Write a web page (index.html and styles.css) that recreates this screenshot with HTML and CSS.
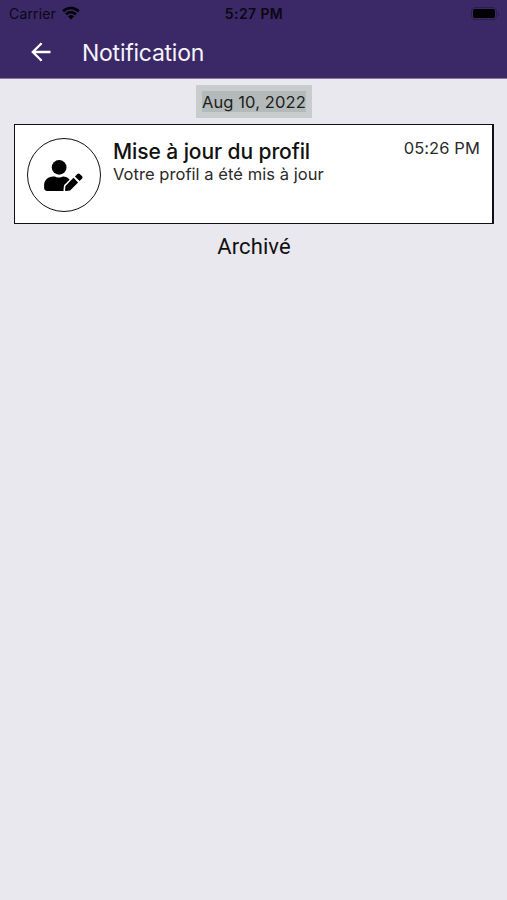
FILE: index.html
```
<!DOCTYPE html>
<html lang="fr">
<head>
  <meta charset="UTF-8">
  <meta name="viewport" content="width=device-width, initial-scale=1.0">
  <title>Notification</title>
  <link rel="stylesheet" href="styles.css">
</head>
<body>
  <header class="header">
    <div class="status-bar">
      <div class="carrier">
        <span>Carrier</span>
        <svg class="wifi" viewBox="0 0 18 14" width="18" height="14">
          <path d="M1.2 5.200a11.200 11.200 0 0 1 15.600 0M4 8.300a7.200 7.200 0 0 1 10 0" fill="none" stroke="#000" stroke-width="2.6"/>
          <path d="M9 13.500l-3-3.100a4.300 4.300 0 0 1 6 0z"/>
        </svg>
      </div>
      <div class="clock">5:27 PM</div>
      <div class="battery"><span class="battery-level"></span></div>
    </div>
    <div class="nav-bar">
      <svg class="back" viewBox="0 0 20 20" width="20" height="20">
        <path d="M19.500 10H2M10.600 1.200L1.800 10l8.800 8.800" fill="none" stroke="#fff" stroke-width="2.3"/>
      </svg>
      <h1>Notification</h1>
    </div>
  </header>
  <main class="content">
    <div class="date"><span>Aug 10, 2022</span></div>
    <div class="card">
      <div class="avatar">
        <svg viewBox="0 0 640 512" width="39" height="31">
          <circle cx="248" cy="122" r="122"/>
          <path d="M313.600 274h-5c-22.200 10.200-38.900 16-64.900 16s-42.600-5.800-64.900-16h-28C60.200 274 0 338 0 412V464c0 26.500 21.500 48 48 48h274.900c-2.400-6.800-3.400-14-2.600-21.300l6.800-60.900 1.200-11.100 7.900-7.900 84-84C395 292 353 274 313.600 274z"/>
          <path d="M353 428l-8 66c-1.100 10.200 7.500 18.800 17.600 17.600l66-8L561 371l-76-76zM627 268.900L589 231c-12-12-27-12-39 0l-41 41 76 76 42-41.700c10-10 10-27 0-37.400z"/>
        </svg>
      </div>
      <div class="message">
        <h2>Mise à jour du profil</h2>
        <p>Votre profil a été mis à jour</p>
      </div>
      <div class="time">05:26 PM</div>
    </div>
    <div class="archive">Archivé</div>
  </main>
</body>
</html>
```

FILE: styles.css
```
* {
  box-sizing: border-box;
}
body {
  margin: 0;
  min-height: 100vh;
  background: #e9e8ee;
  color: #111;
  font-family: Inter, "Liberation Sans", sans-serif;
}
h1, h2, p {
  margin: 0;
}
.header {
  height: 79px;
  background: #3a2966;
  border-bottom: 1px solid #85799f;
}
.status-bar {
  display: grid;
  grid-template-columns: 1fr auto 1fr;
  align-items: center;
  height: 27px;
  padding: 0 8px 0 9px;
  color: #0b0713;
  font-size: 14px;
  line-height: 27px;
}
.carrier {
  display: flex;
  align-items: center;
  gap: 6px;
  letter-spacing: 0.15px;
}
.wifi {
  margin-top: -2px;
}
.clock {
  font-weight: 600;
  letter-spacing: 0.4px;
}
.battery {
  position: relative;
  justify-self: end;
  width: 26px;
  height: 13px;
  margin-right: 2px;
  padding: 1px;
  border: 1px solid #2b1e4c;
  border-radius: 4px;
}
.battery::after {
  content: "";
  position: absolute;
  top: 4px;
  right: -3px;
  width: 1px;
  height: 4px;
  background: #2b1e4c;
}
.battery-level {
  display: block;
  height: 100%;
  border-radius: 2px;
  background: #000;
}
.nav-bar {
  display: flex;
  align-items: center;
  gap: 31px;
  height: 50px;
  padding-left: 31px;
}
.nav-bar h1 {
  padding-top: 1px;
  color: #f6f3fb;
  font-size: 23px;
  font-weight: 400;
  letter-spacing: -0.25px;
}
.content {
  display: flex;
  flex-direction: column;
  align-items: center;
  padding: 6px 13px 0 14px;
}
.date {
  width: 116px;
  height: 33px;
  padding: 6px;
  background: #c8cccd;
}
.date span {
  display: block;
  height: 21px;
  background: #b4bab9;
  color: #1c2020;
  font-size: 16.5px;
  letter-spacing: 0.1px;
  line-height: 22px;
  white-space: nowrap;
}
.card {
  display: flex;
  width: 100%;
  height: 100px;
  margin-top: 6px;
  padding: 13px 12px 12px;
  border: 1px solid #111;
  border-right-width: 2px;
  background: #fff;
}
.avatar {
  display: flex;
  align-items: center;
  justify-content: center;
  width: 74px;
  height: 74px;
  padding-right: 2px;
  border: 1px solid #111;
  border-radius: 50%;
}
.message {
  flex: 1;
  padding-left: 12px;
}
.message h2 {
  padding-top: 1px;
  font-size: 21px;
  font-weight: 500;
  letter-spacing: -0.08px;
  line-height: 25px;
}
.message p {
  color: #2a2a2a;
  font-size: 16.5px;
  letter-spacing: 0.05px;
  line-height: 21px;
}
.time {
  color: #2a2a2a;
  font-size: 16.5px;
  letter-spacing: 0.1px;
  line-height: 21px;
}
.archive {
  margin-top: 10px;
  font-family: Roboto, sans-serif;
  font-size: 22px;
  letter-spacing: 0.1px;
  line-height: 26px;
}
```
